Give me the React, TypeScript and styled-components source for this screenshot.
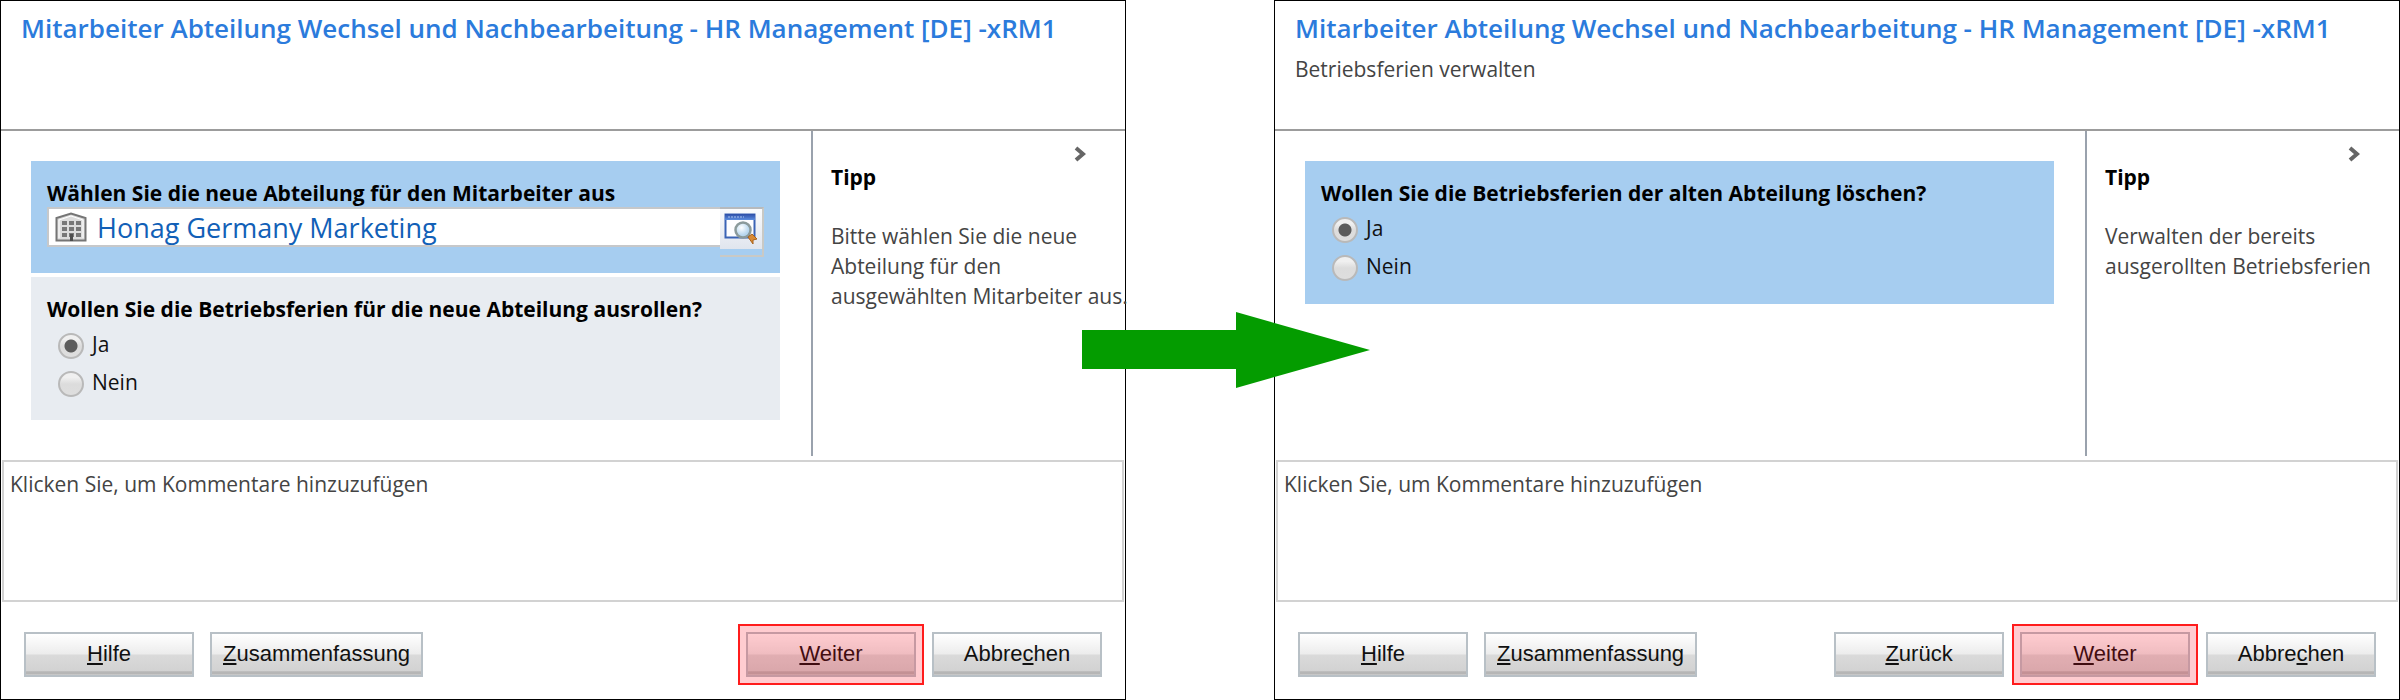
import React, { useId, useState } from "react";
import styled, { createGlobalStyle, css } from "styled-components";

const GlobalStyle = createGlobalStyle`
  *, *::before, *::after { box-sizing: border-box; }
  body {
    margin: 0;
    background: #fff;
    color: #000;
    font-family: "Open Sans", "Noto Sans", sans-serif;
    font-size: 21px;
  }
`;

const Page = styled.main`
  display: grid;
  grid-template-columns: minmax(0, 1fr) 148px minmax(0, 1fr);
  min-height: 100vh;
`;

const Dialog = styled.section`
  display: flex;
  flex-direction: column;
  border: 1px solid #000;
  background: #fff;
`;

const Header = styled.header`
  min-height: 130px;
  padding: 9px 20px;
  border-bottom: 2px solid #9c9c9c;
`;

const Title = styled.h1`
  margin: 0;
  font-size: 26px;
  font-weight: 600;
  line-height: 36px;
  white-space: nowrap;
  color: #2b7bdc;
`;

const Subtitle = styled.p`
  margin: 8px 0 0;
  line-height: 30px;
  color: #444;
`;

const Body = styled.div`
  flex: 1;
  display: grid;
  grid-template-columns: minmax(0, 1fr) 314px;
`;

const Questions = styled.form`
  display: flex;
  flex-direction: column;
  gap: 4px;
  padding: 30px 31px 30px 30px;
`;

const QuestionCard = styled.div<{ $active?: boolean }>`
  padding: 20px 16px 16px;
  background: ${(p) => (p.$active ? "#a6cdf0" : "#e8ecf1")};
`;

const questionText = css`
  display: block;
  margin: 0 0 2px;
  font-size: 21px;
  font-weight: 700;
  line-height: 24px;
`;

const QuestionLabel = styled.label`
  ${questionText}
`;

const QuestionHeading = styled.h2`
  ${questionText}
`;

const Choices = styled.div`
  padding: 2px 0 3px 11px;
`;

const Choice = styled.label`
  display: flex;
  align-items: center;
  gap: 8px;
  height: 38px;
  line-height: 24px;
  color: #111;
`;

const Radio = styled.input`
  appearance: none;
  width: 26px;
  height: 26px;
  margin: 4px 0 0;
  border: 2px solid #b9b9b9;
  border-radius: 50%;
  background: linear-gradient(#f0f0f0 20%, #dcdcdc 50%, #dedede);

  &:checked {
    background:
      radial-gradient(circle, #5c5c5c 6px, transparent 7px),
      linear-gradient(#f0f0f0 20%, #dcdcdc 50%, #dedede);
  }
`;

const Lookup = styled.div`
  display: flex;
  align-items: flex-start;
`;

const LookupField = styled.div`
  flex: 1;
  display: flex;
  align-items: center;
  gap: 10px;
  height: 40px;
  padding-left: 6px;
  border: 2px solid #c6c8ca;
  border-right: 0;
  background: #fff;
`;

const LookupInput = styled.input`
  flex: 1;
  min-width: 0;
  height: 36px;
  padding: 0;
  border: 0;
  outline: 0;
  background: transparent;
  font-family: inherit;
  font-size: 27px;
  color: #1160b7;
`;

const LookupButton = styled.button`
  display: flex;
  justify-content: center;
  width: 44px;
  height: 50px;
  padding: 4px 0 0;
  border: 2px solid #c9c9c5;
  border-left: 0;
  border-top-color: #b7babd;
  background: linear-gradient(#fafbfd, #e0e5ee) top / 100% 40px no-repeat;
`;

const Tip = styled.aside`
  display: flex;
  flex-direction: column;
  padding: 15px 0 0 18px;
  border-left: 2px solid #9aa2ad;
`;

const CollapseButton = styled.button`
  align-self: flex-end;
  display: flex;
  margin: 0 39px 3px 0;
  padding: 0;
  border: 0;
  background: none;
`;

const TipTitle = styled.h2`
  margin: 0 0 32px;
  font-size: 21px;
  font-weight: 700;
  line-height: 24px;
`;

const TipText = styled.p`
  margin: 0;
  line-height: 30px;
  white-space: pre;
  color: #444;
`;

const Comments = styled.textarea`
  display: block;
  height: 142px;
  margin: 4px 1px 0;
  padding: 7px 6px;
  border: 2px solid #d2d2d2;
  border-radius: 0;
  outline: 0;
  resize: none;
  font-family: inherit;
  font-size: 21px;
  line-height: 30px;

  &::placeholder {
    color: #444;
    opacity: 1;
  }
`;

const Footer = styled.footer`
  display: flex;
  justify-content: space-between;
  padding: 30px 23px 22px;
`;

const ButtonGroup = styled.div`
  display: flex;
  gap: 16px;
`;

const Button = styled.button<{ $highlight?: boolean }>`
  position: relative;
  min-width: 170px;
  height: 45px;
  padding: 0 11px 2px;
  border: 2px solid #b8c0c6;
  background: linear-gradient(
    #fff,
    #ececec 49%,
    #dadada 51%,
    #d2d2d2 90%,
    #b6b6b6 92%,
    #b6b6b6 97%,
    #d2d2d2
  );
  font-family: "Liberation Sans", Arial, sans-serif;
  font-size: 22px;
  color: #111;

  u {
    text-decoration-thickness: 2px;
    text-underline-offset: 2px;
    text-decoration-skip-ink: none;
  }

  ${(p) =>
    p.$highlight &&
    css`
      &::after {
        content: "";
        position: absolute;
        inset: -10px;
        border: 2px solid #ff1c1c;
        background: rgba(255, 0, 20, 0.2);
      }
    `}
`;

const Connector = styled.div`
  position: relative;
`;

const Arrow = styled.svg`
  position: absolute;
  z-index: 1;
  top: 312px;
  left: -44px;
`;

function BuildingIcon() {
  return (
    <svg width="32" height="30" viewBox="0 0 32 30" aria-hidden="true">
      <path d="M1.5 28.5V6L16 1.5 30.5 6v22.5z" fill="#dcdcdc" stroke="#757575" strokeWidth="2" />
      <path d="M4 26V8l12-4 12 4v18" fill="none" stroke="#fff" strokeWidth="1" />
      <g fill="#777">
        {[9, 15, 21].map((y) =>
          [7, 14, 21].map((x) => <rect key={`${x}-${y}`} x={x} y={y} width="5" height="4" />)
        )}
      </g>
      <rect x="15" y="22" width="3" height="7" fill="#4c4c4c" />
    </svg>
  );
}

function LookupIcon() {
  return (
    <svg width="34" height="33" viewBox="0 0 34 33" aria-hidden="true">
      <defs>
        <linearGradient id="lookup-bar" x2="0" y2="1">
          <stop stopColor="#2c4da6" />
          <stop offset="1" stopColor="#5b8de0" />
        </linearGradient>
        <radialGradient id="lookup-glass" cx=".4" cy=".35">
          <stop stopColor="#fff" />
          <stop offset="1" stopColor="#b6d6ee" />
        </radialGradient>
      </defs>
      <rect x="1.5" y="1.5" width="29" height="23" fill="#fdfdff" stroke="#3a63b5" strokeWidth="2" />
      <rect x="1" y="1" width="30" height="6" fill="url(#lookup-bar)" />
      <path d="M4 4h16" stroke="#a9c2ef" strokeDasharray="2 1" />
      <path d="M24 22l3 3" stroke="#777" strokeWidth="3" />
      <circle cx="19" cy="17" r="7.5" fill="url(#lookup-glass)" stroke="#8b9a9b" strokeWidth="2.5" />
      <path d="M24 24l4-3 5 5-4 1 0 4z" fill="#d98a35" stroke="#a9631c" />
    </svg>
  );
}

function ChevronIcon() {
  return (
    <svg width="12" height="16" viewBox="0 0 12 16" aria-hidden="true">
      <path d="M2 2l7 6-7 6" fill="none" stroke="#666" strokeWidth="4" />
    </svg>
  );
}

function YesNoQuestion({ text, active }: { text: string; active?: boolean }) {
  const id = useId();
  const [answer, setAnswer] = useState("Ja");
  return (
    <QuestionCard $active={active}>
      <QuestionHeading id={id}>{text}</QuestionHeading>
      <Choices role="radiogroup" aria-labelledby={id}>
        {["Ja", "Nein"].map((option) => (
          <Choice key={option}>
            <Radio
              type="radio"
              name={id}
              value={option}
              checked={answer === option}
              onChange={() => setAnswer(option)}
            />
            {option}
          </Choice>
        ))}
      </Choices>
    </QuestionCard>
  );
}

function DepartmentQuestion() {
  const id = useId();
  return (
    <QuestionCard $active>
      <QuestionLabel htmlFor={id}>Wählen Sie die neue Abteilung für den Mitarbeiter aus</QuestionLabel>
      <Lookup>
        <LookupField>
          <BuildingIcon />
          <LookupInput id={id} type="text" defaultValue="Honag Germany Marketing" />
        </LookupField>
        <LookupButton type="button" aria-label="Abteilung suchen">
          <LookupIcon />
        </LookupButton>
      </Lookup>
    </QuestionCard>
  );
}

interface WizardProps {
  subtitle?: string;
  tip: string;
  canGoBack?: boolean;
  children: React.ReactNode;
}

function Wizard({ subtitle, tip, canGoBack, children }: WizardProps) {
  return (
    <Dialog>
      <Header>
        <Title>Mitarbeiter Abteilung Wechsel und Nachbearbeitung - HR Management [DE] -xRM1</Title>
        {subtitle && <Subtitle>{subtitle}</Subtitle>}
      </Header>
      <Body>
        <Questions>{children}</Questions>
        <Tip>
          <CollapseButton type="button" aria-label="Tipp ausblenden">
            <ChevronIcon />
          </CollapseButton>
          <TipTitle>Tipp</TipTitle>
          <TipText>{tip}</TipText>
        </Tip>
      </Body>
      <Comments aria-label="Kommentare" placeholder="Klicken Sie, um Kommentare hinzuzufügen" />
      <Footer>
        <ButtonGroup>
          <Button type="button"><u>H</u>ilfe</Button>
          <Button type="button"><u>Z</u>usammenfassung</Button>
        </ButtonGroup>
        <ButtonGroup>
          {canGoBack && <Button type="button"><u>Z</u>urück</Button>}
          <Button type="button" $highlight><u>W</u>eiter</Button>
          <Button type="button">Abbre<u>c</u>hen</Button>
        </ButtonGroup>
      </Footer>
    </Dialog>
  );
}

export default function App() {
  return (
    <>
      <GlobalStyle />
      <Page>
        <Wizard tip={"Bitte wählen Sie die neue\nAbteilung für den\nausgewählten Mitarbeiter aus."}>
          <DepartmentQuestion />
          <YesNoQuestion text="Wollen Sie die Betriebsferien für die neue Abteilung ausrollen?" />
        </Wizard>
        <Connector>
          <Arrow width="288" height="76" viewBox="0 0 288 76" aria-hidden="true">
            <path d="M0 18h154V0l134 38-134 38V57H0z" fill="#049c00" />
          </Arrow>
        </Connector>
        <Wizard
          canGoBack
          subtitle="Betriebsferien verwalten"
          tip={"Verwalten der bereits\nausgerollten Betriebsferien"}
        >
          <YesNoQuestion active text="Wollen Sie die Betriebsferien der alten Abteilung löschen?" />
        </Wizard>
      </Page>
    </>
  );
}
